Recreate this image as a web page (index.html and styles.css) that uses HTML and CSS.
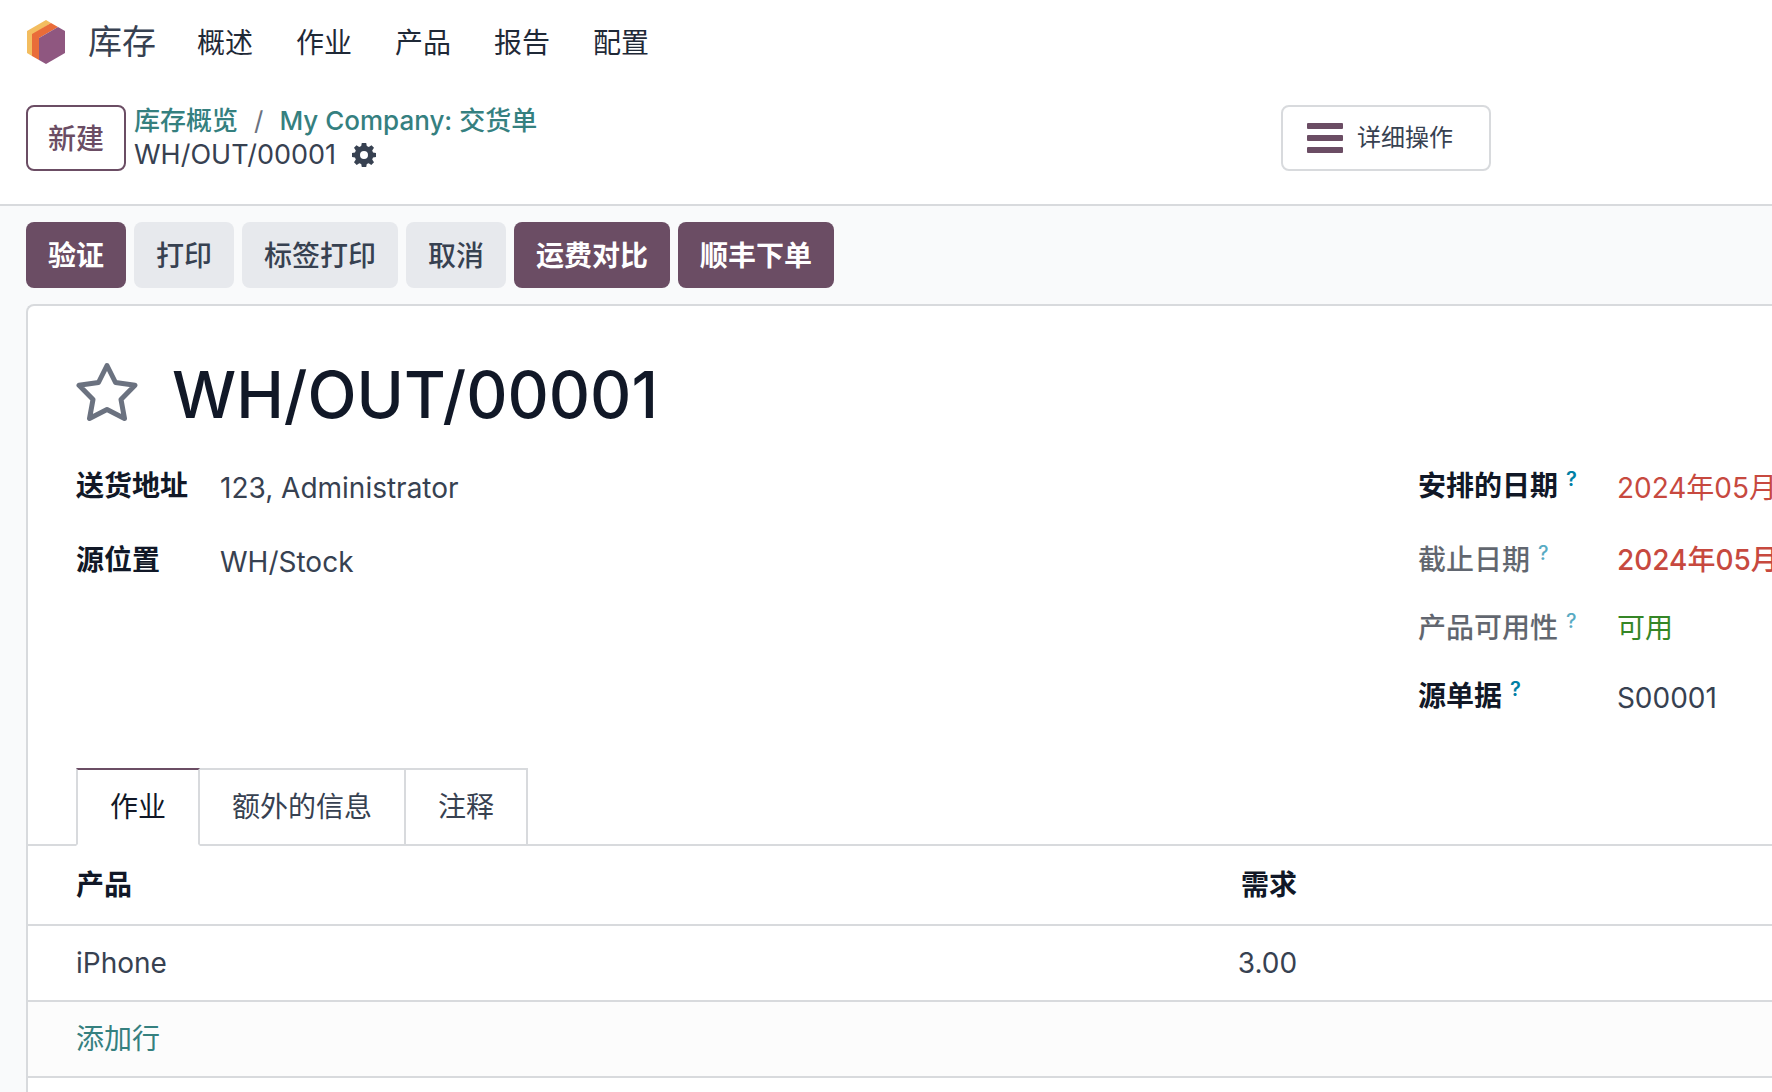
FILE: index.html
```html
<!DOCTYPE html>
<html lang="zh-CN">
<head>
  <meta charset="UTF-8" />
  <meta name="viewport" content="width=device-width, initial-scale=1.0" />
  <title>WH/OUT/00001 - 库存</title>
  <link rel="stylesheet" href="styles.css">
</head>
<body>
  <header class="navbar">
    <a href="#" class="brand">
      <svg class="brand-logo" viewBox="0 0 38 44" aria-hidden="true">
        <path fill="#f3bd5f" d="M19 0 24 3 5 15V36L0 33V11Z"/>
        <path fill="#e96c39" d="M24 3 31 7 12 18V40L5 36V14Z"/>
        <path fill="#8f5780" d="M31 7 38 11V33L19 44 12 40V18Z"/>
      </svg>
      <span>库存</span>
    </a>
    <nav class="menu">
      <a href="#">概述</a>
      <a href="#">作业</a>
      <a href="#">产品</a>
      <a href="#">报告</a>
      <a href="#">配置</a>
    </nav>
  </header>

  <div class="control-panel">
    <button type="button" class="btn btn-outline">新建</button>
    <div class="breadcrumb">
      <div class="breadcrumb-path">
        <a href="#">库存概览</a>
        <span class="slash">/</span>
        <a href="#">My Company: 交货单</a>
      </div>
      <div class="breadcrumb-current">
        <span>WH/OUT/00001</span>
        <button type="button" class="gear" aria-label="操作">
          <svg viewBox="0 0 24 24" aria-hidden="true">
            <path fill="currentColor" fill-rule="evenodd" d="M9.800 0h4.400l.6 3 2 .9L19.500 2.300 22 4.800l-1.800 2.700.8 1.900 3 .5v4.200l-3 .5-.8 2L22 19.300 19.300 22l-2.600-1.800-1.900.8-.6 3H9.800l-.6-3-1.900-.8L4.700 22 2 19.300l1.800-2.700-.8-2-3-.5V9.900l3-.5.8-1.900L2 4.800 4.500 2.300l2.700 1.600 2-.9ZM12 8a4 4 0 1 0 0 8 4 4 0 0 0 0-8Z"/>
          </svg>
        </button>
      </div>
    </div>
    <button type="button" class="stat-button">
      <svg class="bars" viewBox="0 0 36 30" aria-hidden="true">
        <rect width="36" height="6" rx="1"/>
        <rect y="12" width="36" height="6" rx="1"/>
        <rect y="24" width="36" height="6" rx="1"/>
      </svg>
      <span>详细操作</span>
    </button>
  </div>

  <main class="form-view">
    <div class="statusbar">
      <button type="button" class="btn btn-primary">验证</button>
      <button type="button" class="btn btn-secondary">打印</button>
      <button type="button" class="btn btn-secondary">标签打印</button>
      <button type="button" class="btn btn-secondary">取消</button>
      <button type="button" class="btn btn-primary">运费对比</button>
      <button type="button" class="btn btn-primary">顺丰下单</button>
    </div>

    <div class="sheet">
      <div class="title">
        <button type="button" class="star" aria-label="优先级">
          <svg viewBox="0 0 62 60" aria-hidden="true">
            <path fill="none" stroke="#6b7280" stroke-width="5" stroke-linejoin="round" d="M31 3.500 39.500 20.500 59 23.200 45 37.500 48.500 56.500 31 47.500 13.500 56.500 17 37.500 3 23.200 22.500 20.500Z"/>
          </svg>
        </button>
        <h1>WH/OUT/00001</h1>
      </div>

      <div class="groups">
        <div class="group">
          <div class="field">
            <label for="partner">送货地址</label>
            <input type="text" id="partner" value="123, Administrator">
          </div>
          <div class="field">
            <label for="location">源位置</label>
            <input type="text" id="location" value="WH/Stock">
          </div>
        </div>
        <div class="group group-right">
          <div class="field">
            <label for="scheduled">安排的日期<sup>?</sup></label>
            <input type="text" id="scheduled" class="late" value="2024年05月">
          </div>
          <div class="field readonly">
            <span class="label">截止日期<sup>?</sup></span>
            <span class="value late bold">2024年05月</span>
          </div>
          <div class="field readonly">
            <span class="label">产品可用性<sup>?</sup></span>
            <span class="value available">可用</span>
          </div>
          <div class="field">
            <label for="origin">源单据<sup>?</sup></label>
            <input type="text" id="origin" value="S00001">
          </div>
        </div>
      </div>

      <div class="tabs" role="tablist">
        <button type="button" role="tab" class="tab active" aria-selected="true">作业</button>
        <button type="button" role="tab" class="tab" aria-selected="false">额外的信息</button>
        <button type="button" role="tab" class="tab" aria-selected="false">注释</button>
      </div>

      <table class="lines">
        <thead>
          <tr>
            <th class="col-product">产品</th>
            <th class="col-demand">需求</th>
            <th class="col-rest"></th>
          </tr>
        </thead>
        <tbody>
          <tr>
            <td>iPhone</td>
            <td class="col-demand">3.00</td>
            <td></td>
          </tr>
          <tr class="add-row">
            <td colspan="3"><a href="#">添加行</a></td>
          </tr>
        </tbody>
      </table>
    </div>
  </main>
</body>
</html>
```

FILE: styles.css
```css
* {
  box-sizing: border-box;
}

body {
  margin: 0;
  min-height: 100vh;
  display: flex;
  flex-direction: column;
  overflow-x: hidden;
  background: #fff;
  color: #374151;
  font-family: Inter, "Noto Sans CJK SC", sans-serif;
  font-size: 28px;
  line-height: 42px;
}

a {
  color: #35807f;
  text-decoration: none;
}

button, input {
  font: inherit;
  color: inherit;
}

button {
  cursor: pointer;
}

svg {
  display: block;
}

/* top bar */
.navbar {
  display: flex;
  align-items: center;
  height: 84px;
  padding: 0 27px;
}

.brand {
  display: flex;
  align-items: center;
  gap: 23px;
  color: #374151;
  font-size: 34px;
}

.brand-logo {
  width: 38px;
  height: 44px;
}

.menu {
  display: flex;
  gap: 43px;
  margin-left: 41px;
}

.menu a {
  padding-top: 2px;
  color: #1f2937;
}

/* breadcrumb and stat button */
.control-panel {
  display: flex;
  align-items: center;
  height: 122px;
  padding: 0 281px 12px 26px;
  border-bottom: 2px solid #d8dadd;
}

.btn {
  height: 66px;
  padding: 2px 20px 0;
  border: 2px solid transparent;
  border-radius: 8px;
  font-weight: 500;
  white-space: nowrap;
}

.btn-outline {
  background: #fff;
  border-color: #6b4d64;
  color: #6b4d64;
}

.btn-primary {
  background: #6b4d64;
  color: #fff;
  font-weight: 600;
}

.btn-secondary {
  background: #e7e9ed;
  color: #374151;
}

.breadcrumb {
  margin-left: 8px;
  line-height: 34px;
  white-space: nowrap;
}

.breadcrumb-path {
  display: flex;
  gap: 16px;
  font-size: 26px;
  font-weight: 500;
}

.slash {
  color: #6b7280;
  font-weight: 400;
}

.breadcrumb-current {
  display: flex;
  align-items: center;
  gap: 16px;
  font-size: 27px;
}

.gear {
  padding: 0;
  border: 0;
  background: none;
}

.gear svg {
  width: 24px;
  height: 24px;
}

.stat-button {
  display: flex;
  align-items: center;
  gap: 14px;
  width: 210px;
  height: 66px;
  margin-left: auto;
  padding: 0 24px;
  border: 2px solid #d8dadd;
  border-radius: 8px;
  background: #fff;
  font-size: 24px;
  white-space: nowrap;
}

.bars {
  width: 36px;
  height: 30px;
  fill: #6b4d64;
}

/* form */
.form-view {
  flex: 1;
  display: flex;
  flex-direction: column;
  padding-left: 26px;
  background: #f9fafb;
}

.statusbar {
  display: flex;
  gap: 8px;
  padding: 16px 0;
}

.sheet {
  flex: 1;
  border: 2px solid #d8dadd;
  border-width: 2px 0 0 2px;
  border-top-left-radius: 8px;
  background: #fff;
}

.title {
  display: flex;
  align-items: flex-start;
  gap: 34px;
  padding: 56px 48px 0;
}

.title h1 {
  margin: 0;
  color: #111827;
  font-size: 64px;
  font-weight: 500;
  line-height: 66px;
}

.star {
  padding: 0;
  border: 0;
  background: none;
}

.star svg {
  width: 62px;
  height: 60px;
}

.groups {
  display: grid;
  grid-template-columns: 77% 23%;
  padding: 37px 0 19px 48px;
}

.field {
  display: grid;
  grid-template-columns: 144px 1fr;
  margin-bottom: 32px;
  white-space: nowrap;
}

.group-right {
  padding-left: 36px;
}

.group-right .field {
  grid-template-columns: 199px 1fr;
}

.field.readonly {
  margin-bottom: 26px;
}

.field label,
.field .label {
  color: #111827;
  font-weight: 600;
}

.field.readonly .label {
  opacity: 0.66;
  font-weight: 500;
}

.field input {
  width: 100%;
  min-width: 0;
  height: 42px;
  padding: 3px 0 0;
  border: 0;
  outline: 0;
  background: none;
}

.field sup {
  margin-left: 8px;
  color: #0180a5;
  font-size: 20px;
  line-height: 0;
}

.field .late {
  color: #c7493f;
}

.field .bold {
  font-weight: 500;
}

.field .available {
  color: #358626;
}

/* notebook */
.tabs {
  display: flex;
  padding-left: 48px;
  border-bottom: 2px solid #d8dadd;
}

.tab {
  height: 78px;
  margin: 0 0 -2px -2px;
  padding: 0 32px;
  border: 2px solid #d8dadd;
  background: #fff;
}

.tab.active {
  z-index: 1;
  margin-left: 0;
  border-top-color: #6b4d64;
  border-bottom-color: #fff;
  color: #111827;
}

.lines {
  width: 100%;
  border-collapse: separate;
  border-spacing: 0;
  table-layout: fixed;
}

.lines th,
.lines td {
  height: 76px;
  padding: 0 4px;
  border-bottom: 2px solid #d8dadd;
  font-weight: 400;
  text-align: left;
}

.lines th {
  height: 80px;
  color: #111827;
  font-weight: 600;
}

.lines th:first-child,
.lines td:first-child {
  padding-left: 48px;
}

.lines .col-product {
  width: 60%;
}

.lines .col-demand {
  width: 13%;
  text-align: right;
}

.lines .col-rest {
  width: 27%;
}

.lines .add-row td {
  background: #fcfcfc;
}
```
